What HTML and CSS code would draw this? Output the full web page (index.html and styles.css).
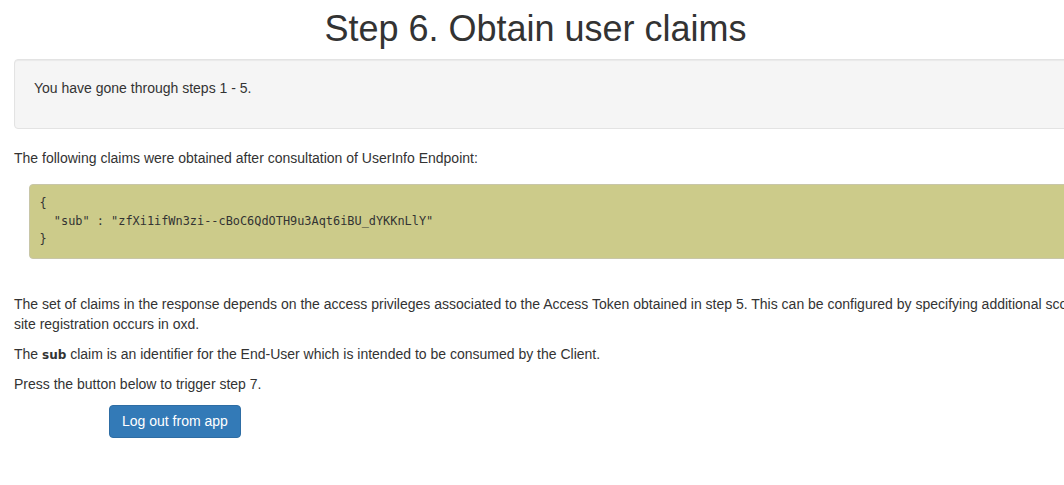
FILE: index.html
```html
<!DOCTYPE html>
<html>
<head>
<meta charset="utf-8">
<title>Step 6. Obtain user claims</title>
<link rel="stylesheet" href="styles.css">
</head>
<body>
<h1 class="title">Step 6. Obtain user claims</h1>
<div class="content">
  <div class="well">
    <p>You have gone through steps 1 - 5.</p>
  </div>
  <p>The following claims were obtained after consultation of UserInfo Endpoint:</p>
  <pre class="claims">{
  "sub" : "zfXi1ifWn3zi--cBoC6QdOTH9u3Aqt6iBU_dYKKnLlY"
}</pre>
  <p class="after-pre">The set of claims in the response depends on the access privileges associated to the Access Token obtained in step 5. This can be configured by specifying additional scopes when site registration occurs in oxd.</p>
  <p>The <code class="kw">sub</code> claim is an identifier for the End-User which is intended to be consumed by the Client.</p>
  <p>Press the button below to trigger step 7.</p>
  <div class="actions">
    <button class="btn-primary" type="button">Log out from app</button>
  </div>
</div>
</body>
</html>
```
FILE: styles.css
```css
html, body {
  margin: 0;
  padding: 0;
  overflow-x: hidden;
  background: #fff;
}
body {
  font-family: "Liberation Sans", Arial, Helvetica, sans-serif;
  font-size: 14px;
  line-height: 1.42857;
  color: #333;
}
.title {
  margin: 9px 0 10px;
  padding-left: 7px;
  font-size: 36px;
  font-weight: 500;
  line-height: 1.1;
  text-align: center;
  color: #333;
}
.content {
  width: 1128px;
  margin-left: 14px;
}
p {
  margin: 0 0 10px;
}
.well {
  background: #f5f5f5;
  border: 1px solid #e3e3e3;
  border-radius: 4px;
  padding: 19px;
  margin-bottom: 20px;
  box-shadow: inset 0 1px 1px rgba(0,0,0,.05);
}
.claims {
  margin: 15px 0 36px 15px;
  padding: 9.5px 10px 9.5px 9.5px;
  background: #cccb8a;
  border: 1px solid #c8c6a8;
  border-radius: 4px;
  font-family: "DejaVu Sans Mono", "Liberation Mono", monospace;
  font-size: 11.9px;
  line-height: 18px;
  color: #333;
  white-space: pre;
}
.kw {
  font-family: "DejaVu Sans", sans-serif;
  font-weight: bold;
  font-size: 12px;
  color: #333;
}
.actions {
  padding-left: 95px;
}
.btn-primary {
  font-family: "Liberation Sans", Arial, sans-serif;
  font-size: 14px;
  line-height: 1.42857;
  padding: 6px 12px;
  color: #fff;
  background: #337ab7;
  border: 1px solid #2e6da4;
  border-radius: 4px;
  cursor: pointer;
}
```
